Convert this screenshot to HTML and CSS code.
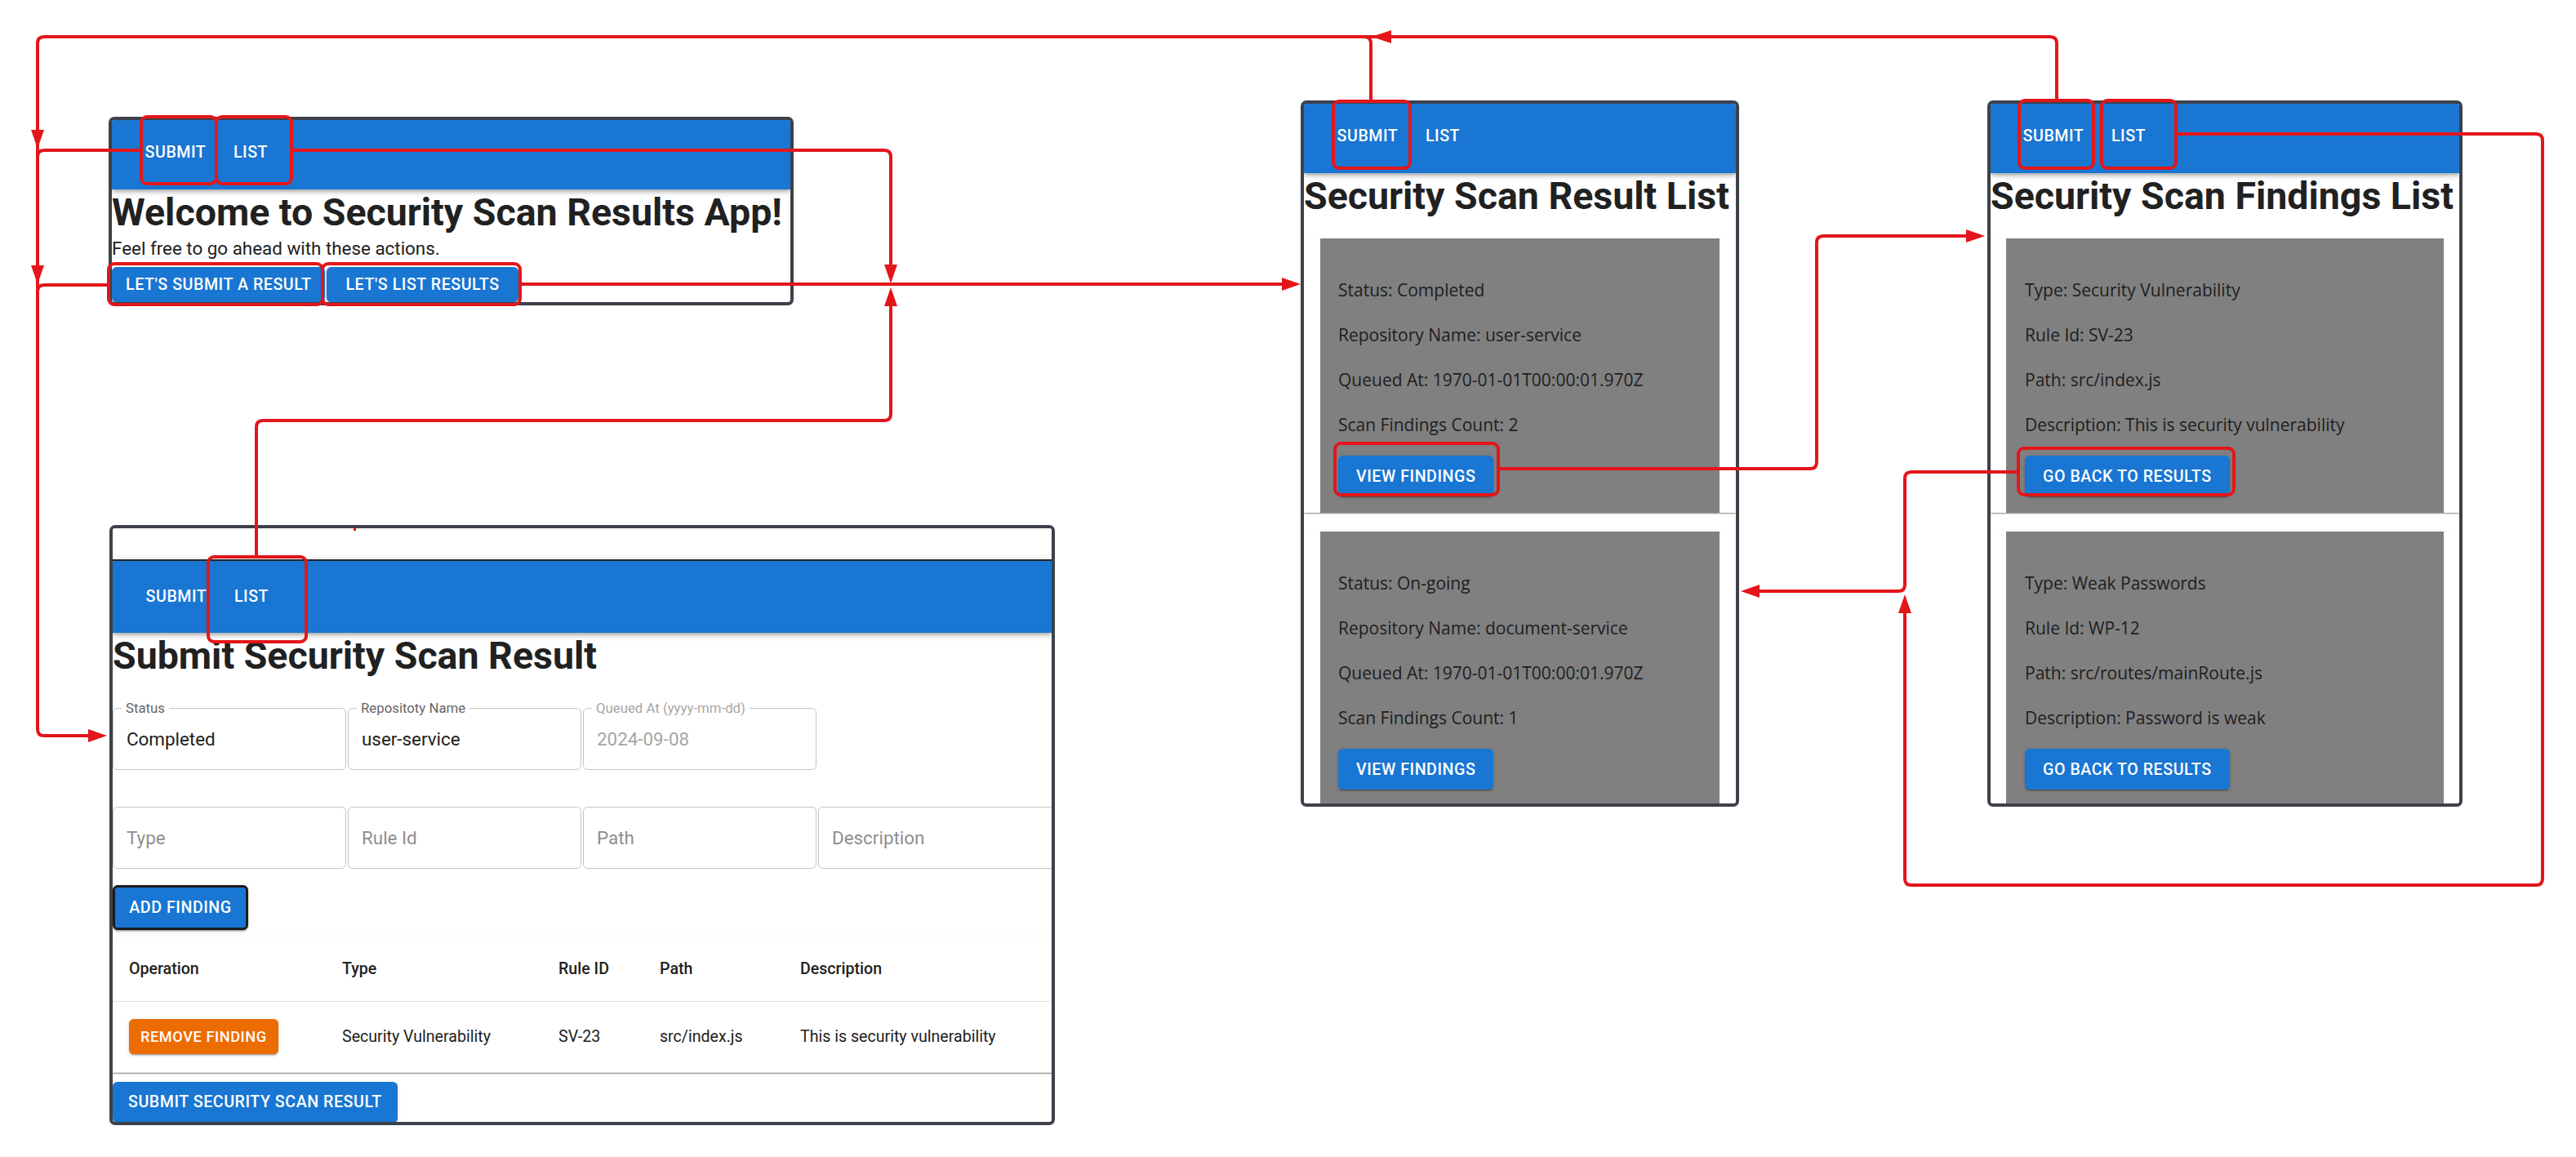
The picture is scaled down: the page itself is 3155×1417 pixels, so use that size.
FILE: index.html
```html
<!DOCTYPE html>
<html lang="en">
<head>
<meta charset="utf-8">
<title>Security Scan Results App – navigation flow</title>
<link rel="stylesheet" href="styles.css">
</head>
<body>
<div class="canvas">

  <section class="frame f-home">
    <header class="appbar">
      <span class="navbtn">Submit</span>
      <span class="navbtn">List</span>
    </header>
    <h1 class="title">Welcome to Security Scan Results App!</h1>
    <p class="lead">Feel free to go ahead with these actions.</p>
    <div class="actions">
      <button class="btn btn-home btn-first">Let's submit a result</button>
      <button class="btn btn-home btn-second">Let's list results</button>
    </div>
  </section>

  <section class="frame f-results">
    <header class="appbar">
      <span class="navbtn">Submit</span>
      <span class="navbtn">List</span>
    </header>
    <h1 class="title">Security Scan Result List</h1>
    <div class="list">
      <div class="item">
        <div class="card">
          <p>Status: Completed</p>
          <p>Repository Name: user-service</p>
          <p>Queued At: 1970-01-01T00:00:01.970Z</p>
          <p>Scan Findings Count: 2</p>
          <button class="btn">View findings</button>
        </div>
      </div>
      <div class="item">
        <div class="card">
          <p>Status: On-going</p>
          <p>Repository Name: document-service</p>
          <p>Queued At: 1970-01-01T00:00:01.970Z</p>
          <p>Scan Findings Count: 1</p>
          <button class="btn">View findings</button>
        </div>
      </div>
    </div>
  </section>

  <section class="frame f-findings">
    <header class="appbar">
      <span class="navbtn">Submit</span>
      <span class="navbtn">List</span>
    </header>
    <h1 class="title">Security Scan Findings List</h1>
    <div class="list">
      <div class="item">
        <div class="card">
          <p>Type: Security Vulnerability</p>
          <p>Rule Id: SV-23</p>
          <p>Path: src/index.js</p>
          <p>Description: This is security vulnerability</p>
          <button class="btn">Go back to results</button>
        </div>
      </div>
      <div class="item">
        <div class="card">
          <p>Type: Weak Passwords</p>
          <p>Rule Id: WP-12</p>
          <p>Path: src/routes/mainRoute.js</p>
          <p>Description: Password is weak</p>
          <button class="btn">Go back to results</button>
        </div>
      </div>
    </div>
  </section>

  <section class="frame f-submit">
    <div class="topstrip"></div>
    <header class="appbar">
      <span class="navbtn">Submit</span>
      <span class="navbtn">List</span>
    </header>
    <h1 class="title">Submit Security Scan Result</h1>
    <div class="form">
      <div class="fields">
        <div class="field"><span class="label">Status</span>Completed</div>
        <div class="field"><span class="label">Repositoty Name</span>user-service</div>
        <div class="field disabled"><span class="label">Queued At (yyyy-mm-dd)</span>2024-09-08</div>
      </div>
      <div class="fields row2">
        <div class="field placeholder">Type</div>
        <div class="field placeholder">Rule Id</div>
        <div class="field placeholder">Path</div>
        <div class="field placeholder">Description</div>
      </div>
      <button class="btn btn-add">Add finding</button>
      <div class="table-wrap">
        <table>
          <colgroup>
            <col class="c1"><col class="c2"><col class="c3"><col class="c4"><col class="c5">
          </colgroup>
          <thead>
            <tr><th>Operation</th><th>Type</th><th>Rule ID</th><th>Path</th><th>Description</th></tr>
          </thead>
          <tbody>
            <tr>
              <td><button class="btn btn-warn">Remove finding</button></td>
              <td>Security Vulnerability</td>
              <td>SV-23</td>
              <td>src/index.js</td>
              <td>This is security vulnerability</td>
            </tr>
          </tbody>
        </table>
      </div>
      <button class="btn btn-submit">Submit security scan result</button>
    </div>
  </section>

  <svg class="wires" width="3155" height="1417" viewBox="0 0 3155 1417" xmlns="http://www.w3.org/2000/svg">
    <g class="lines">
      <path d="M2519 123 V53 Q2519 45 2511 45 H54 Q46 45 46 53 V893 Q46 901 54 901 H112"/>
      <path d="M1679 123 V53 Q1679 45 1671 45"/>
      <path d="M173 184 H54 Q46 184 46 192"/>
      <path d="M133 349 H54 Q46 349 46 357"/>
      <path d="M357 184 H1083 Q1091 184 1091 192 V330"/>
      <path d="M637 348 H1572"/>
      <path d="M314 682 V523 Q314 515 322 515 H1083 Q1091 515 1091 507 V370"/>
      <path d="M1835 574 H2217 Q2225 574 2225 566 V297 Q2225 289 2233 289 H2412"/>
      <path d="M2472 578 H2341 Q2333 578 2333 586 V716 Q2333 724 2325 724 H2152"/>
      <path d="M2665 164 H3106 Q3114 164 3114 172 V1076 Q3114 1084 3106 1084 H2341 Q2333 1084 2333 1076 V748"/>
    </g>
    <g class="heads">
      <polygon points="1680,45 1704,37 1704,53"/>
      <polygon points="46,182 38,159 54,159"/>
      <polygon points="46,348 38,325 54,325"/>
      <polygon points="131,901 108,893 108,909"/>
      <polygon points="1091,347 1083,324 1099,324"/>
      <polygon points="1593,348 1570,340 1570,356"/>
      <polygon points="1091,352 1083,375 1099,375"/>
      <polygon points="2431,289 2408,281 2408,297"/>
      <polygon points="2132,724 2155,716 2155,732"/>
      <polygon points="2333,728 2325,751 2341,751"/>
      <rect x="433" y="646" width="3" height="4"/>
    </g>
    <g class="boxes">
      <rect x="173" y="143" width="92" height="82" rx="7"/>
      <rect x="265" y="143" width="92" height="82" rx="7"/>
      <rect x="133" y="323" width="262" height="50" rx="7"/>
      <rect x="395" y="323" width="242" height="50" rx="7"/>
      <rect x="1633" y="124" width="94" height="82" rx="7"/>
      <rect x="1635" y="543" width="200" height="63" rx="7"/>
      <rect x="2473" y="123" width="91" height="83" rx="7"/>
      <rect x="2574" y="123" width="91" height="83" rx="7"/>
      <rect x="2472" y="549" width="264" height="57" rx="7"/>
      <rect x="255" y="682" width="120" height="104" rx="7"/>
    </g>
  </svg>
</div>
</body>
</html>
```

FILE: styles.css
```css
* {
  box-sizing: border-box;
}

html,
body {
  margin: 0;
  padding: 0;
  background: #ffffff;
}

body {
  width: 3155px;
  height: 1417px;
  overflow: hidden;
  font-family: Roboto, "Liberation Sans", Arial, sans-serif;
  color: #212121;
}

.canvas {
  position: relative;
  width: 3155px;
  height: 1417px;
}

/* ---------- window frames on the diagram canvas ---------- */
.frame {
  position: absolute;
  display: flex;
  flex-direction: column;
  background: #ffffff;
  border: 4px solid #3d4149;
  border-radius: 7px;
  overflow: hidden;
}

.f-home {
  left: 133px;
  top: 143px;
  width: 839px;
  height: 231px;
}

.f-results {
  left: 1593px;
  top: 123px;
  width: 537px;
  height: 865px;
}

.f-findings {
  left: 2434px;
  top: 123px;
  width: 582px;
  height: 865px;
}

.f-submit {
  left: 134px;
  top: 643px;
  width: 1158px;
  height: 735px;
}

/* ---------- app bar ---------- */
.appbar {
  position: relative;
  z-index: 1;
  flex-shrink: 0;
  display: flex;
  align-items: center;
  height: 85px;
  padding: 0 0 5px 32px;
  background: #1976d2;
  box-shadow: 0 2px 4px -1px rgba(0, 0, 0, 0.2), 0 4px 5px 0 rgba(0, 0, 0, 0.14), 0 1px 10px 0 rgba(0, 0, 0, 0.12);
}

.f-findings .appbar {
  padding-left: 31px;
}

.f-submit .appbar {
  height: 90px;
  padding: 0 0 0 32px;
  border-top: 2px solid #262626;
}

.topstrip {
  flex-shrink: 0;
  height: 38px;
  background: #ffffff;
}

.navbtn {
  width: 92px;
  text-align: center;
  color: #ffffff;
  font-family: Roboto, "Liberation Sans", sans-serif;
  font-weight: 500;
  font-size: 19.6px;
  line-height: 1;
  letter-spacing: 0.56px;
  text-transform: uppercase;
}

/* ---------- headings & text ---------- */
.title {
  flex-shrink: 0;
  margin: 0;
  font-family: Roboto, "Liberation Sans", sans-serif;
  font-weight: 700;
  font-size: 46.5px;
  line-height: 56px;
  color: #212121;
  white-space: nowrap;
}

.lead {
  margin: 0;
  font-family: Roboto, "Liberation Sans", sans-serif;
  font-size: 22.4px;
  line-height: 33.6px;
  color: #212121;
  white-space: nowrap;
}

.actions {
  display: flex;
  gap: 2px;
  margin-top: 5px;
}

/* ---------- buttons ---------- */
.btn {
  display: inline-flex;
  align-items: center;
  justify-content: center;
  align-self: flex-start;
  height: 50px;
  padding: 0 22px;
  border: 0;
  border-radius: 5.6px;
  background: #1976d2;
  color: #ffffff;
  font-family: Roboto, "Liberation Sans", sans-serif;
  font-weight: 500;
  font-size: 19.6px;
  letter-spacing: 0.56px;
  text-transform: uppercase;
  white-space: nowrap;
  box-shadow: 0 3px 1px -2px rgba(0, 0, 0, 0.2), 0 2px 2px 0 rgba(0, 0, 0, 0.14), 0 1px 5px 0 rgba(0, 0, 0, 0.12);
}

.btn-home {
  height: 43px;
}

.btn-first {
  padding: 0 17px;
}

.btn-second {
  padding: 0 23px;
}

.btn-add {
  height: 55px;
  width: 166px;
  padding: 0;
  margin-top: 20px;
  border: 3px solid #1c1c1c;
  border-radius: 6px;
}

.btn-warn {
  height: 43px;
  padding: 0 14px;
  font-size: 18.2px;
  background: #ed6c02;
}

.btn-submit {
  margin-top: 11px;
  padding: 0 19px;
  flex-shrink: 0;
}

/* ---------- result / finding lists ---------- */
.list {
  display: flex;
  flex-direction: column;
  gap: 23px;
  margin-top: 24px;
}

.item {
  flex-shrink: 0;
  padding: 0 20px;
  background: #ffffff;
  box-shadow: 0 2px 1px -1px rgba(0, 0, 0, 0.2), 0 1px 1px 0 rgba(0, 0, 0, 0.14), 0 1px 3px 0 rgba(0, 0, 0, 0.12);
}

.f-findings .item {
  padding: 0 19px;
}

.card {
  display: flex;
  flex-direction: column;
  padding: 47px 22px 20px;
  background: #808080;
}

.f-findings .card {
  padding-left: 23px;
}

.card p {
  margin: 0 0 23px;
  font-family: "Open Sans", "Noto Sans", sans-serif;
  font-size: 21px;
  line-height: 32px;
  color: #1e1e1e;
  white-space: nowrap;
}

.card p:last-of-type {
  margin-bottom: 22px;
}

/* ---------- submit form ---------- */
.form {
  display: flex;
  flex-direction: column;
  margin-top: 36px;
}

.fields {
  display: grid;
  grid-template-columns: 286px 286px 286px 300px;
  gap: 2px;
}

.fields.row2 {
  margin-top: 45px;
}

.field {
  position: relative;
  display: flex;
  align-items: center;
  height: 76px;
  padding-left: 16px;
  border: 1px solid #c4c4c4;
  border-radius: 5.6px;
  font-family: Roboto, "Liberation Sans", sans-serif;
  font-size: 22.4px;
  color: #212121;
}

.field .label {
  position: absolute;
  left: 10px;
  top: -11px;
  padding: 0 5px;
  background: #ffffff;
  font-size: 16.8px;
  line-height: 20px;
  color: #666666;
  white-space: nowrap;
}

.field.disabled,
.field.disabled .label {
  color: #a6a6a6;
}

.field.placeholder {
  color: #8e8e8e;
}

.table-wrap {
  flex-shrink: 0;
  width: 1160px;
  margin-top: 8px;
  background: #ffffff;
  box-shadow: 0 2px 1px -1px rgba(0, 0, 0, 0.2), 0 1px 1px 0 rgba(0, 0, 0, 0.14), 0 1px 3px 0 rgba(0, 0, 0, 0.12);
}

table {
  width: 100%;
  border-collapse: collapse;
  table-layout: fixed;
}

.c1 { width: 261px; }
.c2 { width: 265px; }
.c3 { width: 124px; }
.c4 { width: 172px; }

th,
td {
  padding: 0 20px;
  text-align: left;
  border-bottom: 1px solid #e0e0e0;
  font-family: Roboto, "Liberation Sans", sans-serif;
  font-size: 19.6px;
  color: #212121;
  white-space: nowrap;
}

thead th {
  height: 79px;
  font-weight: 500;
}

tbody td {
  height: 87px;
  font-weight: 400;
}

/* ---------- red flow connectors ---------- */
.wires {
  position: absolute;
  left: 0;
  top: 0;
  z-index: 5;
  pointer-events: none;
}

.wires .lines path {
  fill: none;
  stroke: #e3161b;
  stroke-width: 4;
  stroke-linejoin: round;
}

.wires .heads polygon,
.wires .heads rect {
  fill: #e3161b;
}

.wires .boxes rect {
  fill: none;
  stroke: #e3161b;
  stroke-width: 4;
}
```
